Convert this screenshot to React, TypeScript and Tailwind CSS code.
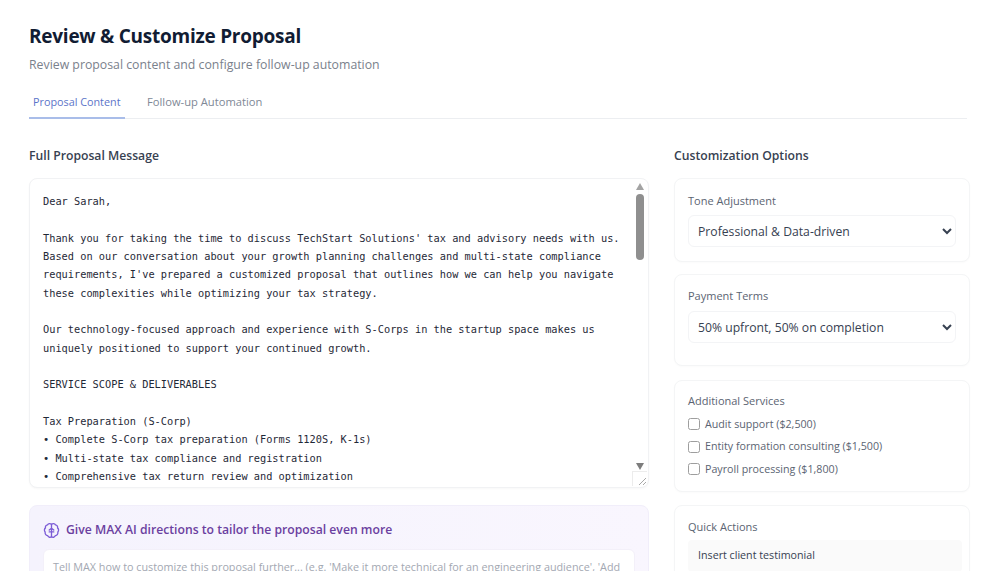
const proposalLines = [
  "Dear Sarah,",
  "",
  "Thank you for taking the time to discuss TechStart Solutions' tax and advisory needs with us.",
  "Based on our conversation about your growth planning challenges and multi-state compliance",
  "requirements, I've prepared a customized proposal that outlines how we can help you navigate",
  "these complexities while optimizing your tax strategy.",
  "",
  "Our technology-focused approach and experience with S-Corps in the startup space makes us",
  "uniquely positioned to support your continued growth.",
  "",
  "SERVICE SCOPE & DELIVERABLES",
  "",
  "Tax Preparation (S-Corp)",
  "• Complete S-Corp tax preparation (Forms 1120S, K-1s)",
  "• Multi-state tax compliance and registration",
  "• Comprehensive tax return review and optimization",
];

const services = ["Audit support ($2,500)", "Entity formation consulting ($1,500)", "Payroll processing ($1,800)"];

function Scrollbar() {
  return (
    <div className="absolute right-[1px] top-[1px] bottom-[1px] w-[15px] flex flex-col items-center bg-white">
      <div className="mt-[3px] h-0 w-0 border-x-[4px] border-b-[7px] border-x-transparent border-b-[#a3a3a3]" />
      <div className="mt-[4px] h-[66px] w-[8px] rounded-[4px] bg-[#8f8f8f]" />
      <div className="mt-auto mb-[16px] h-0 w-0 border-x-[4px] border-t-[7px] border-x-transparent border-t-[#7d7d7d]" />
      <div className="absolute bottom-0 right-0 h-[15px] w-[15px] border-l border-t border-[#ececec] bg-white">
        <svg viewBox="0 0 15 15" className="h-[15px] w-[15px]" fill="none" stroke="#a8a8a8" strokeWidth="1">
          <path d="M6 13 L13 6 M10 13 L13 10" />
        </svg>
      </div>
    </div>
  );
}

function BrainMark() {
  return (
    <svg viewBox="0 0 18 18" className="h-[17px] w-[17px] shrink-0" fill="none" stroke="#7c5cd6" strokeWidth="1.4" strokeLinecap="round" strokeLinejoin="round">
      <path d="M9 2.5C7.8 1.3 5.6 1.4 4.8 3 3.2 3.2 2.2 4.6 2.6 6.2 1.3 7.2 1.1 9.4 2.3 10.6 1.9 12.4 3 14.2 4.8 14.4 5.6 16.4 7.8 16.7 9 15.5 10.2 16.7 12.4 16.4 13.2 14.4 15 14.2 16.1 12.4 15.7 10.6 16.9 9.4 16.7 7.2 15.4 6.2 15.8 4.6 14.8 3.2 13.2 3 12.4 1.4 10.2 1.3 9 2.5Z" />
      <path d="M9 2.5V15.5M9 6.5 6.6 8.6M9 6.5 11.4 8.6M9 10.5H6.6M9 10.5H11.4" />
    </svg>
  );
}

function Card({ title, className, children }: { title: string; className: string; children: React.ReactNode }) {
  return (
    <div className={`rounded-[8px] border border-[#f4f5f6] bg-white px-[13px] shadow-[0_1px_2px_rgba(0,0,0,0.02)] ${className}`}>
      <div className="text-[11px] leading-[15px] font-medium text-[#5b6472]">{title}</div>
      {children}
    </div>
  );
}

function Dropdown({ value, className }: { value: string; className: string }) {
  return (
    <select
      defaultValue={value}
      className={`h-[32px] w-[268px] rounded-[6px] border border-[#f3f4f6] bg-white pl-[5px] text-[12.2px] text-[#374151] ${className}`}
    >
      <option>{value}</option>
    </select>
  );
}

export default function App() {
  return (
    <div className="h-[571px] overflow-hidden bg-white pl-[29px] pr-[30px] pt-[22px] font-['Open_Sans','Noto_Sans',sans-serif]">
      <h1 className="text-[19px] leading-[28px] font-bold tracking-[-0.25px] text-[#111c33]">Review &amp; Customize Proposal</h1>
      <p className="mt-[6px] text-[12.3px] leading-[17px] text-[#7a818c]">Review proposal content and configure follow-up automation</p>

      <div className="mr-[3px] mt-[13px] flex h-[33px] gap-[22px] border-b border-[#eceef1]">
        <div className="h-[33px] w-[96px] border-b-[2px] border-[#a9bde9] pl-[4px] pt-[8px] text-[10.8px] leading-[16px] font-medium whitespace-nowrap text-[#5b74c9]">Proposal Content</div>
        <div className="pt-[8px] text-[11.2px] leading-[16px] font-medium text-[#808896]">Follow-up Automation</div>
      </div>

      <div className="mt-[28px] flex gap-[25px]">
        <div className="w-[620px] shrink-0">
          <h2 className="text-[12.2px] leading-[18px] font-semibold text-[#374151]">Full Proposal Message</h2>
          <div className="relative mt-[13px] h-[310px] overflow-hidden rounded-[8px] border border-[#f1f2f4] bg-white pl-[13px] pt-[13px] shadow-[0_1px_2px_rgba(0,0,0,0.03)]">
            <div className="font-['DejaVu_Sans_Mono','Liberation_Mono',monospace] text-[10.3px] leading-[18.33px] whitespace-pre text-[#1f2937]">
              {proposalLines.map((line, i) => (
                <div key={i} className="h-[18.33px]">{line}</div>
              ))}
            </div>
            <Scrollbar />
          </div>

          <div className="mt-[17px] h-[120px] rounded-[8px] border border-[#f1eefa] bg-gradient-to-r from-[#f5f3fd] to-[#f9f6fe] px-[13px] pt-[14px]">
            <div className="flex items-center gap-[6px] text-[12.2px] leading-[20px] font-semibold text-[#6b3fa0]">
              <BrainMark />
              Give MAX AI directions to tailor the proposal even more
            </div>
            <div className="mt-[9px] h-[80px] rounded-[6px] border border-[#f3f0f9] bg-white px-[9px] pt-[9px] text-[10.8px] leading-[16px] whitespace-nowrap text-[#a3a8b2]">
              Tell MAX how to customize this proposal further... (e.g. 'Make it more technical for an engineering audience', 'Add
            </div>
          </div>
        </div>

        <div className="w-[296px] shrink-0">
          <h2 className="text-[12.2px] leading-[18px] font-semibold text-[#374151]">Customization Options</h2>
          <Card title="Tone Adjustment" className="mt-[13px] h-[84px] pt-[14px]">
            <Dropdown value="Professional & Data-driven" className="mt-[7px]" />
          </Card>
          <Card title="Payment Terms" className="mt-[12px] h-[92px] pt-[13px]">
            <Dropdown value="50% upfront, 50% on completion" className="mt-[8px]" />
          </Card>
          <Card title="Additional Services" className="mt-[14px] h-[112px] pt-[12px]">
            <div className="mt-[7px] flex flex-col gap-[4.5px]">
              {services.map((s) => (
                <label key={s} className="flex h-[18px] items-center gap-[4px] text-[10.7px] text-[#5b6472]">
                  <input type="checkbox" className="m-0 mr-[1px] h-[12px] w-[12px] opacity-70" />
                  {s}
                </label>
              ))}
            </div>
          </Card>
          <Card title="Quick Actions" className="mt-[13px] h-[100px] pt-[13px]">
            <div className="-mr-[6px] mt-[6px] h-[32px] rounded-[4px] bg-[#fafafa] px-[10px] pt-[7px] text-[10.7px] leading-[16px] text-[#374151]">Insert client testimonial</div>
          </Card>
        </div>
      </div>
    </div>
  );
}
